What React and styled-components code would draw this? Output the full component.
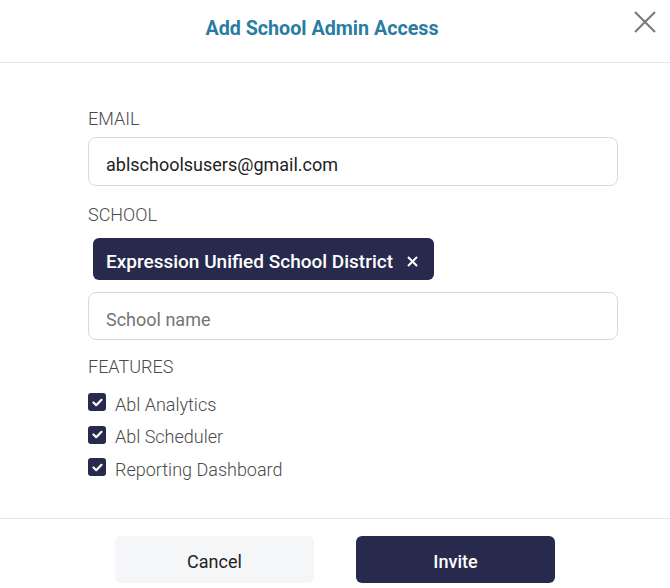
import styled, { createGlobalStyle } from 'styled-components';

const GlobalStyle = createGlobalStyle`
	* {
		box-sizing: border-box;
	}

	body {
		margin: 0;
		background: #ffffff;
		font-family: Roboto, 'Liberation Sans', sans-serif;
	}
`;

const Modal = styled.div`
	width: 670px;
	height: 588px;
	display: flex;
	flex-direction: column;
	background: #ffffff;
`;

const Header = styled.header`
	height: 63px;
	display: flex;
	align-items: flex-start;
	padding: 0 10px 0 14px;
	border-bottom: 1px solid #e4e4ea;
`;

const Title = styled.h2`
	flex: 1;
	margin: 0;
	padding-top: 17px;
	text-align: center;
	font-size: 19.7px;
	font-weight: 700;
	line-height: 24px;
	color: #2a7ca1;
`;

const CloseButton = styled.button`
	width: 30px;
	height: 30px;
	margin-top: 7px;
	padding: 0;
	border: none;
	background: none;
	display: flex;
	align-items: center;
	justify-content: center;
	cursor: pointer;
`;

const Body = styled.div`
	flex: 1;
	padding: 45px 52px 0 88px;
	display: flex;
	flex-direction: column;
`;

const Label = styled.div`
	font-size: 18px;
	font-weight: 300;
	line-height: 21px;
	color: #4a4a4a;
	margin-top: ${(props) => props.$top || 0}px;
`;

const Field = styled.div`
	height: ${(props) => props.$height || 49}px;
	margin-top: ${(props) => props.$top || 0}px;
	border: 1px solid #d6d9de;
	border-radius: 8px;
	display: flex;
	align-items: center;
	padding: ${(props) => props.$placeholder ? 6 : 5}px 17px 0;
	font-size: 18px;
	color: ${(props) => props.$placeholder ? '#757575' : '#222222'};
`;

const Chip = styled.div`
	align-self: flex-start;
	margin: 13px 0 0 5px;
	height: 42px;
	padding: 5px 16px 0 13px;
	display: flex;
	align-items: center;
	gap: 14px;
	background: #272a4c;
	border-radius: 6px;
	color: #ffffff;
	font-size: 19px;
	font-weight: 500;
`;

const FeatureList = styled.div`
	margin-top: 11px;
	display: flex;
	flex-direction: column;
`;

const FeatureRow = styled.label`
	height: 32.5px;
	display: flex;
	align-items: center;
	gap: 9px;
	font-size: 18px;
	font-weight: 300;
	color: #4a4a4a;
`;

const Check = styled.span`
	width: 18px;
	height: 18px;
	border-radius: 3px;
	background: #272a4c;
	display: flex;
	align-items: center;
	justify-content: center;
	margin-top: -4px;
`;

const Footer = styled.footer`
	height: 70px;
	border-top: 1px solid #e4e4ea;
	display: flex;
	justify-content: center;
	gap: 42px;
	padding-top: 17px;
`;

const Button = styled.button`
	width: 199px;
	height: 47px;
	border: none;
	border-radius: 6px;
	padding-top: 5px;
	font-family: inherit;
	font-size: 18px;
	font-weight: ${(props) => props.$primary ? 500 : 400};
	background: ${(props) => props.$primary ? '#272a4c' : '#f5f6f8'};
	color: ${(props) => props.$primary ? '#ffffff' : '#222222'};
	cursor: pointer;
`;

const features = ['Abl Analytics', 'Abl Scheduler', 'Reporting Dashboard'];

const App = () => {
	return (
		<>
			<GlobalStyle />
			<Modal>
				<Header>
					<Title>Add School Admin Access</Title>
					<CloseButton aria-label="Close">
						<svg width="22" height="22" viewBox="0 0 22 22">
							<path d="M1 1 L21 21 M21 1 L1 21" stroke="#777777" strokeWidth="2" fill="none" />
						</svg>
					</CloseButton>
				</Header>
				<Body>
					<Label>EMAIL</Label>
					<Field $top={8}>ablschoolsusers@gmail.com</Field>
					<Label $top={18}>SCHOOL</Label>
					<Chip>
						Expression Unified School District
						<svg width="11" height="11" viewBox="0 0 11 11">
							<path d="M1 1 L10 10 M10 1 L1 10" stroke="#ffffff" strokeWidth="2" fill="none" />
						</svg>
					</Chip>
					<Field $top={12} $height={48} $placeholder>School name</Field>
					<Label $top={16}>FEATURES</Label>
					<FeatureList>
						{features.map((name) => (
							<FeatureRow key={name}>
								<Check>
									<svg width="11" height="9" viewBox="0 0 11 9">
										<path d="M1.5 4.5 L4.2 7.2 L9.5 1.8" stroke="#ffffff" strokeWidth="2.2" fill="none" strokeLinecap="round" strokeLinejoin="round" />
									</svg>
								</Check>
								{name}
							</FeatureRow>
						))}
					</FeatureList>
				</Body>
				<Footer>
					<Button>Cancel</Button>
					<Button $primary>Invite</Button>
				</Footer>
			</Modal>
		</>
	);
};

export default App;
